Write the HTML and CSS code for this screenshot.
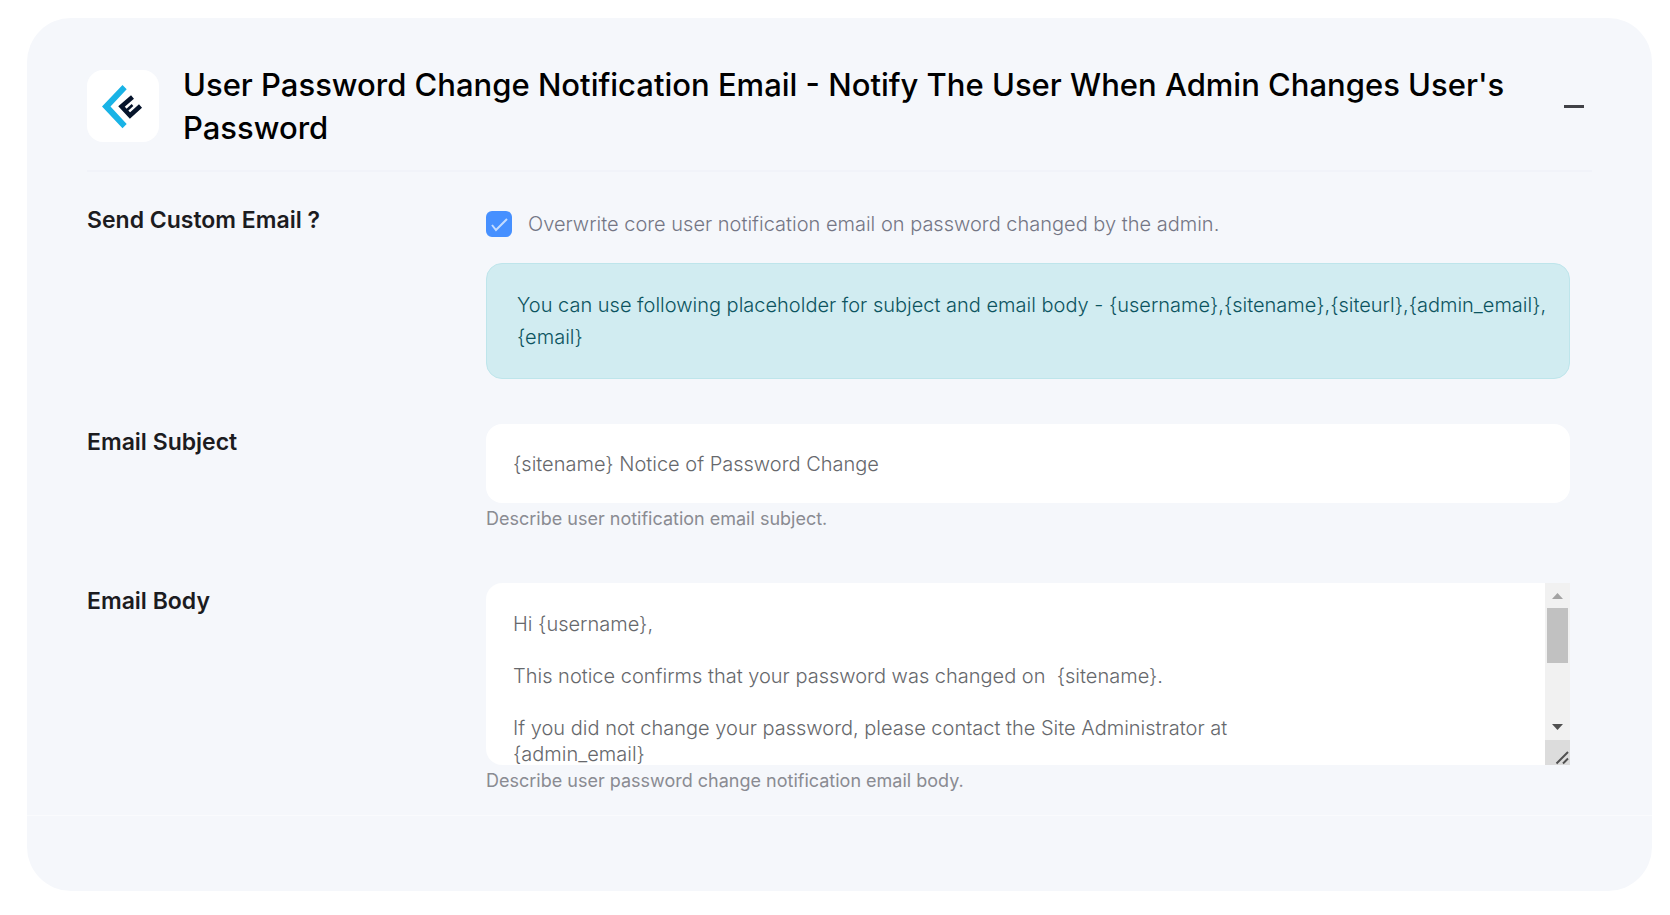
FILE: index.html
```html
<!DOCTYPE html>
<html lang="en">
<head>
    <meta charset="UTF-8">
    <meta name="viewport" content="width=device-width, initial-scale=1.0">
    <title>Email Notification Settings</title>
    <link rel="stylesheet" href="styles.css">
</head>
<body>

    <form class="card">
        <div class="card-body">

            <!-- Header -->
            <div class="card-header">
                <div class="logo">
                    <svg width="72" height="72" viewBox="0 0 72 72" aria-hidden="true">
                        <path d="M35.500 15 L39.700 19.300 L23.500 36.500 L39.700 54 L35.500 58.300 L15 36.500 Z" fill="#19b3e6"/>
                        <path d="M45.500 27 L34.500 36.500 L43 45.500 L53.500 36" fill="none" stroke="#06142b" stroke-width="4.500"/>
                        <path d="M39 41 L45.500 35" fill="none" stroke="#06142b" stroke-width="2.500"/>
                    </svg>
                </div>
                <h1>User Password Change Notification Email - Notify The User When Admin Changes User's Password</h1>
                <button type="button" class="toggle" aria-label="Collapse"><span></span></button>
            </div>

            <!-- Send custom email -->
            <div class="row">
                <label class="row-label" for="custom">Send Custom Email ?</label>
                <div class="row-field">
                    <div class="check">
                        <input type="checkbox" id="custom" checked>
                        <label for="custom">Overwrite core user notification email on password changed by the admin.</label>
                    </div>
                    <div class="notice">You can use following placeholder for subject and email body - {username},{sitename},{siteurl},{admin_email},<wbr>{email}</div>
                </div>
            </div>

            <!-- Subject -->
            <div class="row">
                <label class="row-label" for="subject">Email Subject</label>
                <div class="row-field">
                    <input type="text" id="subject" class="control" value="{sitename} Notice of Password Change">
                    <p class="help">Describe user notification email subject.</p>
                </div>
            </div>

            <!-- Body -->
            <div class="row">
                <label class="row-label" for="body">Email Body</label>
                <div class="row-field">
                    <div class="textarea-wrap">
                        <textarea id="body" class="control">Hi {username},

This notice confirms that your password was changed on  {sitename}.

If you did not change your password, please contact the Site Administrator at
{admin_email}

This email has been sent to {email}

Regards,
All at {sitename}
{siteurl}</textarea>
                        <div class="scrollbar" aria-hidden="true">
                            <svg width="25" height="25" viewBox="0 0 25 25"><path d="M7 16h11l-5.500-6z" fill="#a3a3a3"/></svg>
                            <div class="track"><div class="thumb"></div></div>
                            <svg width="25" height="25" viewBox="0 0 25 25"><path d="M7 9h11l-5.500 6z" fill="#505050"/></svg>
                            <svg class="grip" width="25" height="25" viewBox="0 0 25 25"><path d="M11.500 23.500L23 12M18 23.500l5-5" fill="none" stroke="#505050" stroke-width="2"/></svg>
                        </div>
                    </div>
                    <p class="help">Describe user password change notification email body.</p>
                </div>
            </div>

        </div>
        <div class="card-footer"></div>
    </form>

</body>
</html>
```
FILE: styles.css
```css
* {
    box-sizing: border-box;
}

body {
    margin: 0;
    padding: 18px 18px 24px 27px;
    font-family: Inter, Arial, sans-serif;
    font-size: 20px;
    font-weight: 300;
    background: #fff;
    color: #1c1c1f;
}

.card {
    background: #f5f7fb;
    border-radius: 44px;
}

.card-body {
    padding: 45px 60px 0;
    border-bottom: 1px solid #fafbfd;
}

.card-footer {
    height: 75px;
}

/* Header */
.card-header {
    display: flex;
    align-items: center;
    gap: 24px;
    padding-bottom: 21px;
    border-bottom: 2px solid #f1f3f9;
}

.logo {
    flex: none;
    width: 72px;
    height: 72px;
    background: #fff;
    border-radius: 16px;
}

.logo svg {
    display: block;
}

h1 {
    flex: 1;
    margin: 0;
    font-size: 31px;
    font-weight: 500;
    line-height: 43px;
    color: #000;
}

.toggle {
    padding: 8px;
    border: none;
    background: transparent;
    cursor: pointer;
}

.toggle span {
    display: block;
    width: 20px;
    height: 3px;
    background: #414247;
}

/* Rows */
.row {
    display: grid;
    grid-template-columns: 399px 1fr;
    padding: 30px 22px 15px 0;
}

.row-label {
    padding-top: 4px;
    font-size: 23px;
    font-weight: 600;
    line-height: 28px;
}

.check {
    display: flex;
    align-items: center;
    gap: 16px;
    padding-top: 8px;
    margin-bottom: 25px;
    line-height: 28px;
    color: #747685;
}

.check input {
    appearance: none;
    flex: none;
    width: 26px;
    height: 26px;
    margin: 0;
    border-radius: 6px;
    background: #4690ff url("data:image/svg+xml,%3Csvg xmlns='http://www.w3.org/2000/svg' viewBox='0 0 26 26'%3E%3Cpath d='M6 14l4 5L21 8' fill='none' stroke='%23c4dcff' stroke-width='2'/%3E%3C/svg%3E");
}

.notice {
    padding: 25px 15px 25px 30px;
    border: 1px solid #bee5eb;
    border-radius: 16px;
    background: #d1ecf1;
    color: #0c5460;
    line-height: 32px;
}

.control {
    display: block;
    width: 100%;
    border: none;
    outline: none;
    border-radius: 16px;
    background: #fff;
    color: #66686c;
    font-family: inherit;
    font-size: 20px;
    font-weight: inherit;
}

input.control {
    height: 79px;
    padding: 0 27px;
}

textarea.control {
    height: 182px;
    padding: 28px 52px 28px 27px;
    line-height: 26px;
    border-radius: 16px 0 0 16px;
    overflow-y: scroll;
    resize: none;
}

.help {
    margin: 3px 0 6px;
    font-size: 18px;
    font-weight: 400;
    line-height: 26px;
    color: #8a8b92;
}

/* Scrollbar */
.textarea-wrap {
    position: relative;
}

.scrollbar {
    position: absolute;
    top: 0;
    right: 0;
    bottom: 0;
    width: 25px;
    display: flex;
    flex-direction: column;
    background: #f1f1f1;
}

.track {
    flex: 1;
    padding: 0 2px;
}

.thumb {
    height: 55px;
    background: #c1c1c1;
}

.grip {
    background: #dcdcdc;
}
```
